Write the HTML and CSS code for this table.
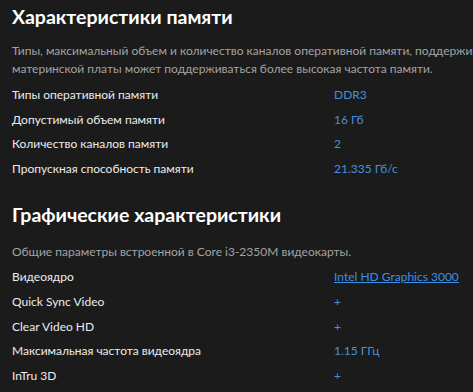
FILE: index.html
```html
<!DOCTYPE html>
<html lang="ru">
<head>
<meta charset="utf-8">
<link rel="stylesheet" href="styles.css">
</head>
<body>
<div class="page">
  <section class="section">
    <h2 class="title">Характеристики памяти</h2>
    <p class="desc">Типы, максимальный объем и количество каналов оперативной памяти, поддерживаемых Core i3-2350M. В зависимости от<br>материнской платы может поддерживаться более высокая частота памяти.</p>
    <div class="table">
      <div class="row"><span class="label">Типы оперативной памяти</span><span class="value">DDR3</span></div>
      <div class="row"><span class="label">Допустимый объем памяти</span><span class="value">16 Гб</span></div>
      <div class="row"><span class="label">Количество каналов памяти</span><span class="value">2</span></div>
      <div class="row"><span class="label">Пропускная способность памяти</span><span class="value">21.335 Гб/с</span></div>
    </div>
  </section>
  <section class="section section-gpu">
    <h2 class="title">Графические характеристики</h2>
    <p class="desc">Общие параметры встроенной в Core i3-2350M видеокарты.</p>
    <div class="table">
      <div class="row"><span class="label">Видеоядро</span><a class="value link" href="#">Intel HD Graphics 3000</a></div>
      <div class="row"><span class="label">Quick Sync Video</span><span class="value">+</span></div>
      <div class="row"><span class="label">Clear Video HD</span><span class="value">+</span></div>
      <div class="row"><span class="label">Максимальная частота видеоядра</span><span class="value">1.15 ГГц</span></div>
      <div class="row"><span class="label">InTru 3D</span><span class="value">+</span></div>
    </div>
  </section>
</div>
</body>
</html>
```

FILE: styles.css
```css
html, body {
  margin: 0;
  padding: 0;
  background: #1b1b1b;
  overflow: hidden;
}
body {
  font-family: Lato, "Open Sans", sans-serif;
  color: #e6e6e6;
  width: 473px;
  height: 392px;
}
.page {
  width: 900px;
  padding: 3px 12px 0;
}
.section {
  display: flex;
  flex-direction: column;
}
.title {
  margin: 0;
  font-size: 19.5px;
  line-height: 28px;
  font-weight: 700;
  color: #ffffff;
}
.desc {
  margin: 11px 0 4px;
  font-size: 12px;
  line-height: 18px;
  color: #a3a3a3;
}
.section-gpu .desc {
  margin: 14px 0 3px;
}
.table {
  display: flex;
  flex-direction: column;
  margin-bottom: 20px;
}
.row {
  display: flex;
  height: 24.8px;
  align-items: center;
  font-size: 12px;
}
.label {
  width: 322px;
  color: #ececec;
}
.value {
  color: #4790dd;
}
.link {
  color: #3d8fe6;
  text-decoration: underline;
}
```
